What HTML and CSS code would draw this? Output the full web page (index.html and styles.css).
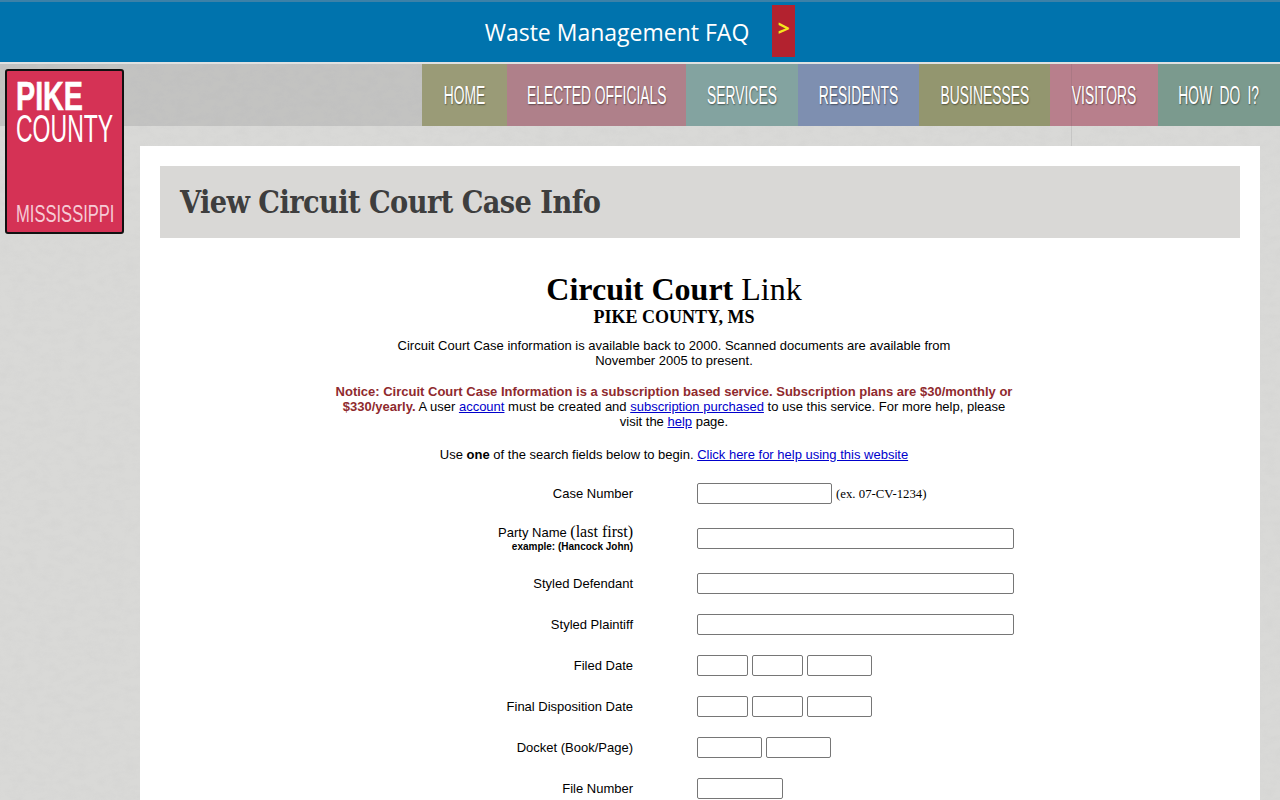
FILE: index.html
```html
<!DOCTYPE html>
<html lang="en">
<head>
<meta charset="utf-8">
<title>View Circuit Court Case Info</title>
<link rel="stylesheet" href="styles.css">
</head>
<body>
<div class="alert">
  <span class="alert-text">Waste Management FAQ</span>
  <a class="alert-btn" href="#">&gt;</a>
</div>
<header class="header">
  <a class="logo" href="#">
    <span class="logo-top"><span class="logo-pike">PIKE</span></span>
    <span class="logo-top"><span class="logo-county">COUNTY</span></span>
    <span class="logo-state"><span class="logo-ms">MISSISSIPPI</span></span>
  </a>
  <nav class="nav">
    <a class="nav-item n1" href="#"><span>HOME</span></a>
    <a class="nav-item n2" href="#"><span>ELECTED OFFICIALS</span></a>
    <a class="nav-item n3" href="#"><span>SERVICES</span></a>
    <a class="nav-item n4" href="#"><span>RESIDENTS</span></a>
    <a class="nav-item n5" href="#"><span>BUSINESSES</span></a>
    <a class="nav-item n6" href="#"><span>VISITORS</span></a>
    <a class="nav-item n7" href="#"><span>HOW DO I?</span></a>
  </nav>
  <div class="seam"></div>
</header>
<main class="panel">
  <h1 class="page-title"><span>View Circuit Court Case Info</span></h1>
  <div class="content">
    <h2 class="app-title"><b>Circuit Court</b> Link</h2>
    <h3 class="app-sub">PIKE COUNTY, MS</h3>
    <p class="intro">Circuit Court Case information is available back to 2000. Scanned documents are available from November 2005 to present.</p>
    <p class="notice"><b class="warn">Notice: Circuit Court Case Information is a subscription based service. Subscription plans are $30/monthly or $330/yearly.</b> A user <a href="#">account</a> must be created and <a href="#">subscription purchased</a> to use this service. For more help, please visit the <a href="#">help</a> page.</p>
    <p class="begin">Use <b>one</b> of the search fields below to begin. <a href="#">Click here for help using this website</a></p>
    <form class="form">
      <label class="lbl">Case Number</label>
      <div class="fld"><input class="w135" type="text"><span class="hint">(ex. 07-CV-1234)</span></div>
      <label class="lbl lbl-party"><span>Party Name <span class="party">(last first)</span></span><b class="example">example: (Hancock John)</b></label>
      <div class="fld"><input class="w317" type="text"></div>
      <label class="lbl">Styled Defendant</label>
      <div class="fld"><input class="w317" type="text"></div>
      <label class="lbl">Styled Plaintiff</label>
      <div class="fld"><input class="w317" type="text"></div>
      <label class="lbl">Filed Date</label>
      <div class="fld"><input class="w51" type="text"><input class="w51" type="text"><input class="w65" type="text"></div>
      <label class="lbl">Final Disposition Date</label>
      <div class="fld"><input class="w51" type="text"><input class="w51" type="text"><input class="w65" type="text"></div>
      <label class="lbl">Docket (Book/Page)</label>
      <div class="fld"><input class="w65" type="text"><input class="w65" type="text"></div>
      <label class="lbl">File Number</label>
      <div class="fld"><input class="w86" type="text"></div>
    </form>
  </div>
</main>
</body>
</html>
```
FILE: styles.css
```css
* { box-sizing: border-box; }
html, body { margin: 0; padding: 0; }
body {
  position: relative;
  min-height: 800px;
  font-family: "Liberation Sans", Arial, sans-serif;
  font-size: 13px;
  color: #000;
  background-color: #d9d9d7;
  background-image: url("data:image/svg+xml,%3Csvg xmlns='http://www.w3.org/2000/svg' width='500' height='500'%3E%3Cfilter id='n'%3E%3CfeTurbulence type='fractalNoise' baseFrequency='.08 .14' numOctaves='4' seed='4'/%3E%3CfeColorMatrix values='0 0 0 0 .5 0 0 0 0 .5 0 0 0 0 .5 .22 0 0 0 -.08'/%3E%3C/filter%3E%3Crect width='500' height='500' filter='url(%23n)'/%3E%3C/svg%3E");
}
a { color: #0000cc; }

.alert {
  height: 62px;
  background: #0073ad;
  border-top: 2px solid #3c81a8;
  display: flex;
  align-items: center;
  justify-content: center;
  gap: 23px;
}
.alert-text {
  font-family: "Open Sans", sans-serif;
  font-size: 23px;
  color: #fff;
}
.alert-btn {
  width: 23px;
  height: 52px;
  margin-top: -2px;
  background: #b3222f;
  color: #f5e71c;
  font-family: "Open Sans", sans-serif;
  font-weight: 700;
  font-size: 21px;
  line-height: 46px;
  text-align: center;
  text-decoration: none;
}

.header {
  height: 64px;
  border-top: 2px solid #dfe1e1;
  background: rgba(90, 90, 88, .17);
  display: flex;
  justify-content: flex-end;
}
.nav { display: flex; height: 62px; }
.nav-item {
  height: 62px;
  display: flex;
  align-items: center;
  justify-content: center;
  color: #fff;
  text-decoration: none;
  white-space: nowrap;
  font-family: "Liberation Sans", sans-serif;
  font-size: 25px;
  text-shadow: 1px 1px 2px rgba(0, 0, 0, .45);
}
.nav-item span { display: inline-block; transform: scaleX(.555); }
.n1 { width: 85px; background: #9a9b77; }
.n2 { width: 179px; background: #af808a; }
.n3 { width: 112px; background: #83a3a0; }
.n4 { width: 121px; background: #7e8fb0; }
.n5 { width: 131px; background: #93966f; }
.n6 { width: 108px; background: #b87f8c; }
.n7 { width: 122px; background: #7b9a8e; word-spacing: 6px; }
.seam {
  position: absolute;
  left: 1071px;
  top: 64px;
  width: 1px;
  height: 82px;
  background: rgba(70, 70, 70, .12);
}

.logo {
  position: absolute;
  left: 5px;
  top: 69px;
  width: 119px;
  height: 165px;
  background: #d53255;
  border: 2px solid #111;
  border-radius: 3px;
  color: #fff;
  text-decoration: none;
  display: flex;
  flex-direction: column;
  padding: 6px 0 0 9px;
}
.logo-top { display: block; white-space: nowrap; }
.logo-pike {
  display: inline-block;
  font-weight: 700;
  font-size: 41px;
  line-height: 38px;
  -webkit-text-stroke: .6px #fff;
  transform: scaleX(.7);
  transform-origin: left center;
}
.logo-county {
  display: inline-block;
  font-size: 39px;
  line-height: 28px;
  transform: scaleX(.59);
  transform-origin: left center;
}
.logo-state {
  display: block;
  margin-top: auto;
  margin-bottom: 5px;
  white-space: nowrap;
  color: #f6cbd5;
}
.logo-ms {
  display: inline-block;
  font-size: 24px;
  line-height: 26px;
  transform: scaleX(.69);
  transform-origin: left center;
}

.panel {
  margin: 20px 20px 0 140px;
  background: #fff;
  padding: 20px 20px 30px;
}
.page-title {
  margin: 0;
  height: 72px;
  padding: 0 20px;
  background: #d9d8d6;
  color: #3e3e3e;
  font-family: "DejaVu Serif Condensed", "DejaVu Serif", serif;
  font-size: 32px;
  line-height: 72px;
  font-weight: 700;
  letter-spacing: -.6px;
  white-space: nowrap;
}
.page-title span {
  display: inline-block;
  transform: scaleX(.946);
  transform-origin: left center;
}
.content { width: 700px; margin: 0 0 0 164px; text-align: center; }
.app-title {
  margin: 33px 0 0;
  font-family: "Liberation Serif", serif;
  font-size: 32px;
  line-height: 36px;
  font-weight: 400;
}
.app-sub {
  margin: 0;
  font-family: "Liberation Serif", serif;
  font-size: 18px;
  line-height: 21px;
  font-weight: 700;
}
.intro, .notice, .begin { line-height: 15px; margin: 0; }
.intro { width: 600px; margin: 10px auto 0; }
.notice { margin-top: 16px; padding: 0 10px; }
.warn { color: #8f2a2e; }
.begin { margin-top: 18px; }

.form {
  display: grid;
  grid-template-columns: 309px 1fr;
  column-gap: 64px;
  row-gap: 20px;
  margin-top: 21px;
  text-align: left;
}
.lbl {
  display: flex;
  flex-direction: column;
  justify-content: center;
  align-items: flex-end;
  height: 21px;
}
.lbl-party { height: 29px; }
.party { font-family: "Liberation Serif", serif; font-size: 16px; line-height: 16px; }
.example { font-size: 10px; line-height: 13px; }
.fld { display: flex; align-items: center; gap: 4px; }
input {
  height: 21px;
  padding: 1px 2px;
  border: 1px solid #767676;
  border-radius: 2px;
  background: #fff;
}
.hint { font-family: "Liberation Serif", serif; font-size: 12.8px; padding-top: 1px; }
.w135 { width: 135px; }
.w317 { width: 317px; }
.w51 { width: 51px; }
.w65 { width: 65px; }
.w86 { width: 86px; }
```
